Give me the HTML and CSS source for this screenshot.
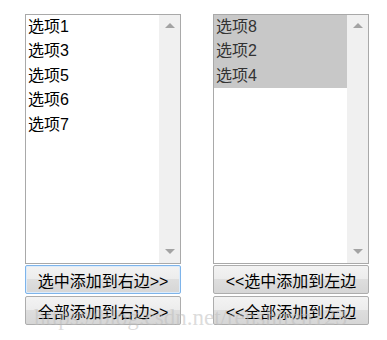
FILE: index.html
```html
<!DOCTYPE html>
<html lang="zh-CN">
<head>
    <meta charset="UTF-8">
    <title>选项移动</title>
    <link rel="stylesheet" href="styles.css">
</head>
<body>

    <div class="page">
        <!-- 左边列表 -->
        <div class="column">
            <div class="listbox">
                <ul class="options">
                    <li>选项1</li>
                    <li>选项3</li>
                    <li>选项5</li>
                    <li>选项6</li>
                    <li>选项7</li>
                </ul>
                <div class="scrollbar">
                    <span class="arrow up"></span>
                    <span class="arrow down"></span>
                </div>
            </div>
            <button class="btn focused">选中添加到右边&gt;&gt;</button>
            <button class="btn">全部添加到右边&gt;&gt;</button>
        </div>

        <!-- 右边列表 -->
        <div class="column">
            <div class="listbox">
                <ul class="options">
                    <li class="selected">选项8</li>
                    <li class="selected">选项2</li>
                    <li class="selected">选项4</li>
                </ul>
                <div class="scrollbar">
                    <span class="arrow up"></span>
                    <span class="arrow down"></span>
                </div>
            </div>
            <button class="btn">&lt;&lt;选中添加到左边</button>
            <button class="btn">&lt;&lt;全部添加到左边</button>
        </div>
    </div>

    <div class="watermark">https://blog.csdn.net/renshiren123</div>

</body>
</html>
```

FILE: styles.css
```css
body {
    margin: 0;
    background: #ffffff;
    font-family: 'Liberation Sans', 'Noto Sans CJK SC', sans-serif;
    font-size: 16px;
    color: #000;
}
.page {
    display: flex;
    gap: 32px;
    padding: 14px 0 0 25px;
}
.column {
    width: 156px;
    display: flex;
    flex-direction: column;
    gap: 2px;
}
.listbox {
    height: 250px;
    box-sizing: border-box;
    border: 1px solid #a9a9a9;
    display: flex;
    margin-bottom: -1px;
}
.options {
    list-style: none;
    margin: 0;
    padding: 0;
    flex: 1;
}
.options li {
    height: 24.4px;
    line-height: 24px;
    padding-left: 2px;
}
.options li.selected {
    background: #c8c8c8;
    color: #333;
}
.scrollbar {
    width: 21px;
    background: #f0f0f0;
    display: flex;
    flex-direction: column;
    justify-content: space-between;
    align-items: center;
    padding: 8px 0 9px;
}
.arrow {
    width: 0;
    height: 0;
    border-left: 5px solid transparent;
    border-right: 5px solid transparent;
}
.arrow.up {
    border-bottom: 5px solid #a3a3a3;
}
.arrow.down {
    border-top: 5px solid #a3a3a3;
}
.btn {
    height: 29px;
    width: 100%;
    padding: 0;
    font-family: inherit;
    font-size: 16px;
    color: #000;
    border: 1px solid #adadad;
    border-radius: 2px;
    background: linear-gradient(#f3f3f3, #ececec 50%, #dedede 50%, #d6d6d6);
}
.btn.focused {
    border-color: #7eb4ea;
    box-shadow: inset 0 0 0 1px #dcecfc;
}
.watermark {
    position: absolute;
    left: 34px;
    top: 305px;
    font-family: 'Liberation Serif', serif;
    font-size: 23px;
    color: rgba(190, 190, 190, 0.55);
    white-space: nowrap;
    pointer-events: none;
}
```
